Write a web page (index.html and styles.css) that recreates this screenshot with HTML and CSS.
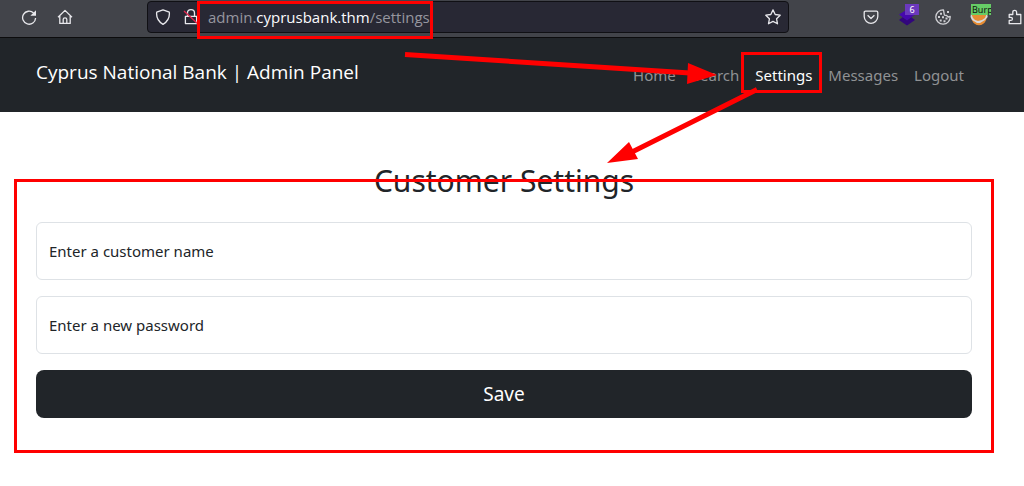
FILE: index.html
```html
<!DOCTYPE html>
<html lang="en">
<head>
<meta charset="utf-8">
<meta name="viewport" content="width=device-width, initial-scale=1">
<title>Cyprus National Bank | Admin Panel</title>
<link rel="stylesheet" href="styles.css">
</head>
<body>
<div class="toolbar">
  <button class="tool" type="button" aria-label="Reload">
    <svg class="icon" viewBox="0 0 16 16"><path d="M14.600 9A6.500 6.500 0 1 1 12.600 4"/><path class="fill" d="M15 1.200v5.600H9.400z"/></svg>
  </button>
  <button class="tool" type="button" aria-label="Home">
    <svg class="icon" viewBox="0 0 16 16"><path d="M1 8.200 8 1.400l7 6.800M2.800 7v7.400h10.400V7M6.200 14.200v-4q0-1.400 1.800-1.400t1.800 1.400v4"/></svg>
  </button>
  <div class="address">
    <button class="shield" type="button" aria-label="Tracking protection">
      <svg class="icon" viewBox="0 0 16 16"><path d="M8 .8 14.300 3.200q.9 7.800-6.300 12.200Q.8 11 1.700 3.200z"/></svg>
    </button>
    <button class="lock" type="button" aria-label="Connection not secure">
      <svg class="icon" viewBox="0 0 16 16"><path d="M4.500 7V4a3.500 3.300 0 0 1 7 0v3M2.400 7.400h11.200v7.200H2.400z"/><path class="strike" d="m1 2 14 13"/></svg>
    </button>
    <div class="url">admin.<span class="domain">cyprusbank.thm</span>/settings</div>
    <button class="star" type="button" aria-label="Bookmark this page">
      <svg class="icon" viewBox="0 0 16 16"><path d="m8 .9 2.200 4.600 5 .7-3.600 3.600.9 5L8 12.400l-4.500 2.400.9-5L.8 6.200l5-.7z"/></svg>
    </button>
  </div>
  <div class="extensions">
    <button class="tool" type="button" aria-label="Save to Pocket">
      <svg class="icon" viewBox="0 0 16 16"><path d="M2.500 2.200h11q1.300 0 1.300 1.300v4q0 3-2.200 4.900Q10.500 14.300 8 14.300t-4.600-1.900Q1.200 10.500 1.200 7.500v-4q0-1.300 1.300-1.300zM4.600 6.300 8 9.500l3.400-3.200"/></svg>
    </button>
    <button class="tool" type="button" aria-label="Wappalyzer, 6 technologies">
      <svg class="icon-plain" viewBox="0 0 18 18"><path fill="#32067c" d="m1 12 4-3 4 3 4-3 4 3-8 5.500z"/><path fill="#4608ad" d="m1 6.500 8-5 8 5-8 6z"/></svg>
      <span class="badge badge-purple">6</span>
    </button>
    <button class="tool" type="button" aria-label="Cookie editor">
      <svg class="icon cookie" viewBox="0 0 16 16"><path d="M8.500.8a7.200 7.200 0 1 0 6.700 6.700l-2 .5-1.600-1.500-2.200-.4-.4-2.200z"/><path class="fill" d="M5 3.800h2v2H5zM3 7h2v2H3zM7 7.200h2v2H7zM10.500 8.500h2v2h-2zM4.700 10.500h2v2h-2zM8.500 11.200h2v2h-2zM12 2h2v2h-2z"/></svg>
    </button>
    <button class="tool" type="button" aria-label="Proxy: Burp">
      <svg class="icon-plain" viewBox="0 0 18 18"><circle cx="9" cy="9.500" r="7.600" fill="#e78d34"/><path fill="#d7d8dc" d="m1 5 2 5 2 2 3 1 4-1 3-2 2-5 .7 4-2.700 3-5 3H7l-5-3-1.500-3z"/><path fill="#e78d34" d="M2.200 12.500Q9 18 15.800 12.500 13 17.300 9 17.300t-6.800-4.800zM6 7h7l-1 4H7z"/></svg>
      <span class="badge badge-green">Burp</span>
    </button>
    <button class="tool" type="button" aria-label="Extensions">
      <svg class="icon" viewBox="0 0 16 16"><path d="M2.200 5.500h3.600V3.200q0-1.900 1.900-1.900t1.900 1.900v2.300h4.200v9.200H2.200v-3.300h1.600q1.600 0 1.600-1.500t-1.600-1.500H2.200z"/></svg>
    </button>
  </div>
</div>

<header class="header">
  <a class="brand" href="#">Cyprus National Bank | Admin Panel</a>
  <nav class="nav">
    <a href="#">Home</a>
    <a href="#">Search</a>
    <a class="active" href="#" aria-current="page">Settings</a>
    <a href="#">Messages</a>
    <a href="#">Logout</a>
  </nav>
</header>

<main class="main">
  <h1 class="title">Customer Settings</h1>
  <form class="form">
    <div class="field">
      <input id="customer" type="text">
      <label for="customer">Enter a customer name</label>
    </div>
    <div class="field">
      <input id="password" type="password">
      <label for="password">Enter a new password</label>
    </div>
    <button class="save" type="submit">Save</button>
  </form>
</main>

<svg class="marks" viewBox="0 0 1024 486" width="1024" height="486" aria-hidden="true">
  <g fill="none" stroke="#f00" stroke-width="3">
    <path d="M198.500 2.500h233v35h-233zM742.500 53.500h78v38h-78zM15.500 180.500h977v271h-977z"/>
    <path stroke-width="5" d="M405 54.500 690 73M757 89.500 632 152"/>
  </g>
  <path fill="#f00" d="m688 63 29 12-30 9zM607 163l22-21 9 17z"/>
</svg>
</body>
</html>
```
FILE: styles.css
```css
* {
  box-sizing: border-box;
}

body {
  margin: 0;
  background: #fff;
  color: #212529;
  font: 16px/24px "Noto Sans", "Open Sans", sans-serif;
}

button {
  font: inherit;
  border: 0;
  padding: 0;
  background: none;
}

a {
  text-decoration: none;
}

.toolbar {
  display: flex;
  align-items: flex-start;
  height: 38px;
  padding-left: 11px;
  background: #42444a;
  border-bottom: 1px solid #0c0c0d;
  overflow: hidden;
}

.tool {
  position: relative;
  display: flex;
  flex: none;
  align-items: center;
  justify-content: center;
  width: 36px;
  height: 34px;
}

.icon {
  width: 16px;
  height: 16px;
  fill: none;
  stroke: #e8e8ec;
  stroke-width: 1.3;
  stroke-linejoin: round;
}

.icon .fill {
  fill: #e8e8ec;
  stroke: none;
}

.icon .strike {
  stroke: #e22850;
}

.cookie {
  opacity: 0.85;
}

.icon-plain {
  width: 18px;
  height: 18px;
}

.address {
  display: flex;
  flex: 1;
  align-items: center;
  min-width: 0;
  height: 32px;
  margin: 1px 64px 0;
  padding: 0 7px;
  background: #282834;
  border: 1px solid #101014;
  border-radius: 4px;
}

.address button {
  display: flex;
}

.address .lock {
  margin-left: 12px;
}

.url {
  flex: 1;
  min-width: 0;
  margin-left: 9px;
  color: #96969f;
  font-family: "Open Sans", sans-serif;
  font-size: 15px;
  white-space: nowrap;
  overflow: hidden;
}

.domain {
  color: #fbfbfe;
}

.extensions {
  display: flex;
  width: 171px;
}

.badge {
  position: absolute;
  top: 4px;
  height: 11px;
  font-size: 9px;
  line-height: 11px;
}

.badge-purple {
  left: 16px;
  width: 14px;
  color: #fff;
  background: #6b39bd;
}

.badge-green {
  left: 10px;
  width: 20px;
  padding-left: 1px;
  color: #111;
  background: #66cc66;
  text-align: left;
  overflow: hidden;
}

.header {
  display: flex;
  justify-content: space-between;
  padding: 16px 52px 16px 36px;
  background: #212529;
}

.brand {
  padding: 3px 0 9px;
  color: #fff;
  font-family: "Open Sans", sans-serif;
  font-size: 19px;
  line-height: 30px;
}

.nav {
  display: flex;
  padding-top: 1px;
}

.nav a {
  padding: 8px;
  color: #909294;
  font-size: 15px;
}

.nav .active {
  color: #fff;
}

.main {
  padding: 48px 52px 48px 36px;
}

.title {
  margin: 0 0 20px;
  font-size: 30px;
  font-weight: 400;
  line-height: 42px;
  text-align: center;
}

.form {
  display: grid;
  gap: 16px;
}

.field {
  display: grid;
}

.field input,
.field label {
  grid-area: 1 / 1;
}

.field input {
  width: 100%;
  height: 58px;
  padding: 16px 12px;
  border: 1px solid #dee2e6;
  border-radius: 6px;
  background: #fff;
  font: inherit;
}

.field label {
  align-self: center;
  padding-left: 13px;
  font-size: 15px;
  pointer-events: none;
}

.save {
  height: 48px;
  border-radius: 8px;
  background: #212529;
  color: #fff;
  font-size: 19px;
}

.marks {
  position: absolute;
  top: 0;
  left: 0;
  pointer-events: none;
}
```
